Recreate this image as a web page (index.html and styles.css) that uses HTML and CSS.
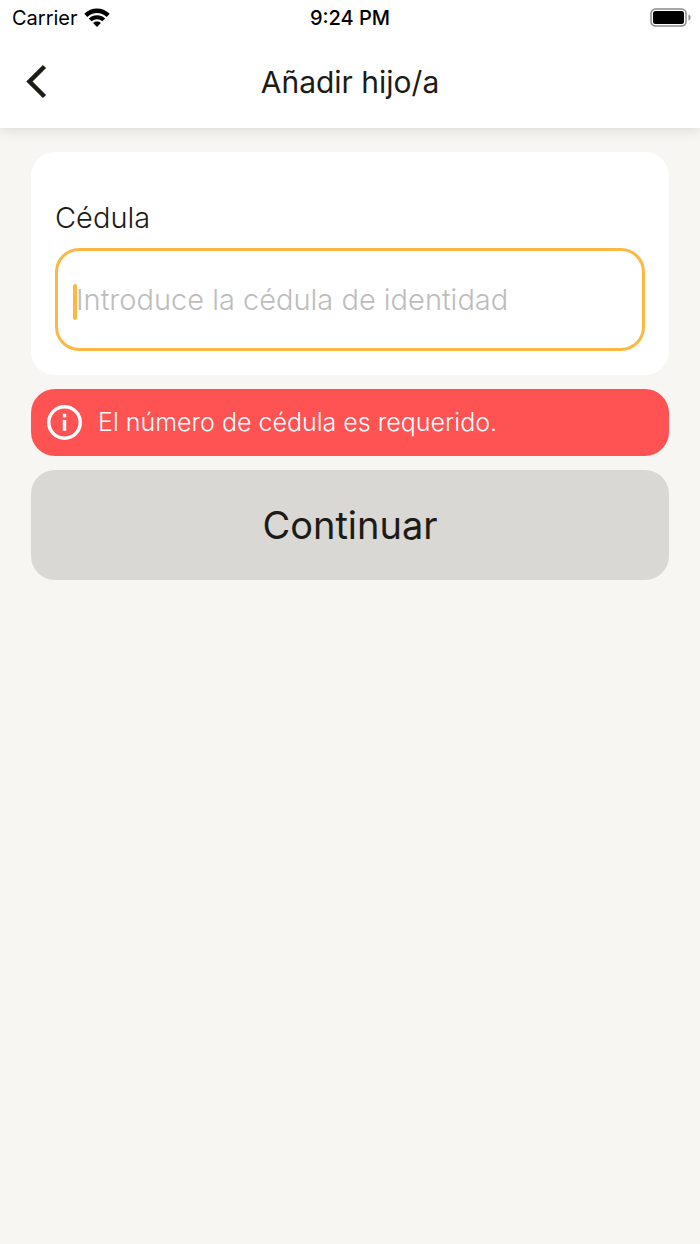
FILE: index.html
```html
<!DOCTYPE html>
<html lang="es">
<head>
    <meta charset="UTF-8" />
    <meta name="viewport" content="width=device-width, initial-scale=1" />
    <title>Añadir hijo/a</title>
    <link rel="stylesheet" href="styles.css">
</head>
<body>
<header class="header">
    <div class="status-bar">
        <div class="carrier">
            Carrier
            <svg class="wifi" viewBox="0 0 26 20" aria-hidden="true">
                <path d="M0.3 5.8C7.6-1.2 18.4-1.2 25.7 5.8L22.7 9C17 3.6 9 3.6 3.3 9Z"/>
                <path d="M4.8 10.5C9.5 6.1 16.5 6.1 21.2 10.5L18.4 13.3C15.2 10.4 10.8 10.4 7.6 13.3Z"/>
                <path d="M9.1 14.9C11.3 13 14.7 13 16.9 14.9L13 18.9Z"/>
            </svg>
        </div>
        <div class="time">9:24 PM</div>
        <svg class="battery" viewBox="0 0 42 20" aria-label="Batería" role="img">
            <rect x="1" y="1" width="35" height="17" rx="4.5" fill="none" stroke="#8a8a8a" stroke-width="1.5"/>
            <rect x="3" y="3" width="31" height="13" rx="2.5"/>
            <path d="M38.5 6.5C41.3 7.8 41.3 11.2 38.5 12.5Z" fill="#8a8a8a"/>
        </svg>
    </div>
    <nav class="nav">
        <button class="back" type="button" aria-label="Volver">
            <svg viewBox="0 0 22 36" aria-hidden="true">
                <path d="M19.5 2.5L4.5 17.5L19.5 32.5"/>
            </svg>
        </button>
        <h1 class="title">Añadir hijo/a</h1>
    </nav>
</header>

<main>
    <form class="form" novalidate>
        <div class="card">
            <label class="label" for="cedula">Cédula</label>
            <div class="field">
                <input class="input" id="cedula" type="text" placeholder="Introduce la cédula de identidad" aria-describedby="error">
                <span class="caret"></span>
            </div>
        </div>
        <div class="alert" id="error" role="alert">
            <svg class="info" viewBox="0 0 34 34" aria-hidden="true">
                <circle cx="17" cy="17" r="15.3"/>
                <path d="M17 14.5V25"/>
                <path d="M17 8.5V12"/>
            </svg>
            <span>El número de cédula es requerido.</span>
        </div>
        <button class="submit" type="submit">Continuar</button>
    </form>
</main>
</body>
</html>
```
FILE: styles.css
```css
* {
    box-sizing: border-box;
}
body {
    margin: 0;
    min-height: 100vh;
    font-family: Inter, "Liberation Sans", sans-serif;
    background: #f7f6f2;
    color: #1d1b16;
}
.header {
    background: #fff;
    box-shadow: 0 2px 12px rgba(0, 0, 0, 0.12);
}
.status-bar {
    display: grid;
    grid-template-columns: 1fr auto 1fr;
    align-items: center;
    height: 36px;
    padding: 0 8px;
    font-size: 20px;
    color: #000;
}
.carrier {
    display: flex;
    align-items: center;
    gap: 6px;
    padding-left: 4px;
}
.wifi {
    width: 26px;
    height: 20px;
}
.time {
    font-weight: 500;
}
.battery {
    justify-self: end;
    width: 42px;
    height: 20px;
}
.nav {
    display: grid;
    grid-template-columns: 48px 1fr 48px;
    align-items: center;
    height: 92px;
    padding: 0 12px;
}
.back {
    display: flex;
    justify-content: center;
    padding: 8px 0;
    border: none;
    background: none;
    cursor: pointer;
}
.back svg {
    width: 22px;
    height: 36px;
    fill: none;
    stroke: #1d1b16;
    stroke-width: 4.5;
}
.title {
    margin: 0;
    font-size: 30px;
    font-weight: 400;
    text-align: center;
}
.form {
    display: flex;
    flex-direction: column;
    gap: 14px;
    padding: 24px 31px;
}
.card {
    padding: 48px 24px 24px;
    background: #fff;
    border-radius: 24px;
}
.label {
    display: block;
    margin-bottom: 12px;
    font-size: 29px;
    line-height: 36px;
    font-weight: 300;
}
.field {
    position: relative;
}
.input {
    display: block;
    width: 100%;
    height: 103px;
    padding: 0 18px;
    border: 3px solid #fbb843;
    border-radius: 24px;
    outline: none;
    background: #fff;
    font: 300 29px Inter, "Liberation Sans", sans-serif;
    color: #1d1b16;
}
.input::placeholder {
    color: #bdbdbd;
    opacity: 1;
}
.caret {
    position: absolute;
    left: 18px;
    top: 36px;
    width: 4px;
    height: 36px;
    border-radius: 2px;
    background: #fbb843;
}
.input:not(:placeholder-shown) + .caret {
    display: none;
}
.alert {
    display: flex;
    align-items: center;
    gap: 16px;
    padding: 16px;
    border-radius: 24px;
    background: #ff5252;
    color: #fff;
    font-size: 25px;
    line-height: 35px;
    font-weight: 300;
}
.info {
    flex: none;
    width: 35px;
    height: 35px;
    fill: none;
    stroke: #fff;
    stroke-width: 3.4;
}
.submit {
    padding: 31px 24px;
    border: none;
    border-radius: 24px;
    background: #d9d8d4;
    color: #1d1b16;
    font: 400 38px/48px Inter, "Liberation Sans", sans-serif;
    cursor: pointer;
}
```
